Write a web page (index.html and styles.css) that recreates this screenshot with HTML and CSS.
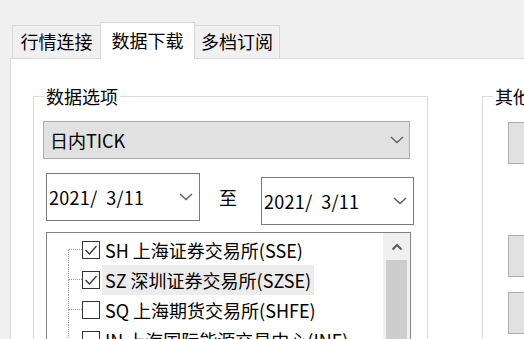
FILE: index.html
```html
<!DOCTYPE html>
<html lang="zh-CN">
<head>
<meta charset="utf-8">
<link rel="stylesheet" href="styles.css">
</head>
<body>
<div class="tabs">
  <div class="tab tab-1">行情连接</div>
  <div class="tab tab-2 active">数据下载</div>
  <div class="tab tab-3">多档订阅</div>
</div>
<div class="panel">
  <fieldset class="group group-data">
    <legend>数据选项</legend>
    <div class="combo">
      <span>日内TICK</span>
      <svg class="chev" width="14" height="8" viewBox="0 0 14 8"><path d="M1 1 L7 6.5 L13 1" fill="none" stroke="#606060" stroke-width="1.4"/></svg>
    </div>
    <div class="date-row">
      <div class="date date-1">
        <span class="date-text">2021/  3/11</span>
        <svg class="chev" width="14" height="8" viewBox="0 0 14 8"><path d="M1 1 L7 6.5 L13 1" fill="none" stroke="#606060" stroke-width="1.4"/></svg>
      </div>
      <div class="to">至</div>
      <div class="date date-2">
        <span class="date-text">2021/  3/11</span>
        <svg class="chev" width="14" height="8" viewBox="0 0 14 8"><path d="M1 1 L7 6.5 L13 1" fill="none" stroke="#606060" stroke-width="1.4"/></svg>
      </div>
    </div>
    <div class="treebox">
      <ul class="tree">
        <li class="row first">
          <span class="conn"><span class="conn-top"></span><span class="conn-bot"></span></span>
          <span class="cb"><svg width="18" height="18" viewBox="0 0 18 18"><path d="M3.5 9 L7.5 13 L14.5 5" fill="none" stroke="#333" stroke-width="1.3"/></svg></span>
          <span class="label">SH 上海证券交易所(SSE)</span>
        </li>
        <li class="row">
          <span class="conn"><span class="conn-top"></span><span class="conn-bot"></span></span>
          <span class="cb"><svg width="18" height="18" viewBox="0 0 18 18"><path d="M3.5 9 L7.5 13 L14.5 5" fill="none" stroke="#333" stroke-width="1.3"/></svg></span>
          <span class="label hl">SZ 深圳证券交易所(SZSE)</span>
        </li>
        <li class="row">
          <span class="conn"><span class="conn-top"></span><span class="conn-bot"></span></span>
          <span class="cb"></span>
          <span class="label">SQ 上海期货交易所(SHFE)</span>
        </li>
        <li class="row">
          <span class="conn"><span class="conn-top"></span><span class="conn-bot"></span></span>
          <span class="cb"></span>
          <span class="label">IN 上海国际能源交易中心(INE)</span>
        </li>
      </ul>
      <div class="scrollbar">
        <div class="sb-up"><svg width="12" height="8" viewBox="0 0 12 8"><path d="M1.5 6.5 L6 2 L10.5 6.5" fill="none" stroke="#606060" stroke-width="2.2"/></svg></div>
        <div class="sb-thumb"></div>
      </div>
    </div>
  </fieldset>
  <fieldset class="group group-other">
    <legend>其他</legend>
    <div class="btn btn-1"></div>
    <div class="btn btn-2"></div>
    <div class="btn btn-3"></div>
  </fieldset>
</div>
</body>
</html>
```

FILE: styles.css
```css
html, body {
  margin: 0;
  padding: 0;
  overflow: hidden;
}
body {
  width: 524px;
  height: 339px;
  background: #f0f0f0;
  font-family: "Noto Sans CJK SC", "Noto Sans", sans-serif;
  font-size: 18px;
  color: #000;
}
.tabs {
  display: flex;
  align-items: flex-end;
  padding-top: 22px;
  padding-left: 12px;
  height: 36px;
}
.tab {
  box-sizing: border-box;
  height: 33px;
  line-height: 31px;
  text-align: center;
  border: 1px solid #d9d9d9;
  border-bottom: none;
  background: #f0f0f0;
}
.tab-1 { width: 88px; border-right: none; }
.tab-2 { width: 95px; }
.tab-3 { width: 85px; border-left: none; }
.tab.active {
  height: 37px;
  line-height: 34px;
  background: #fff;
  margin-bottom: -1px;
  position: relative;
  z-index: 1;
}
.panel {
  display: flex;
  align-items: flex-start;
  margin-left: 10px;
  width: 514px;
  height: 281px;
  overflow: hidden;
  box-sizing: border-box;
  background: #fff;
  border-top: 1px solid #d9d9d9;
  border-left: 1px solid #d9d9d9;
  padding-left: 22px;
  padding-top: 25px;
}
.group {
  margin: 0;
  padding: 0;
  border: 1px solid #dcdcdc;
  min-width: 0;
  height: 400px;
  box-sizing: border-box;
}
.group legend {
  margin-left: 10px;
  padding: 0 2px;
  line-height: 24px;
  height: 24px;
  white-space: nowrap;
}
.group-data {
  width: 395px;
  flex: none;
}
.group-other {
  margin-left: 54px;
  width: 150px;
  flex: none;
}
.combo {
  box-sizing: border-box;
  margin-top: 13px;
  margin-left: 9px;
  width: 367px;
  height: 38px;
  background: #e1e1e1;
  border: 1px solid #adadad;
  display: flex;
  align-items: center;
  justify-content: space-between;
  padding-left: 6px;
  padding-right: 5px;
}
.combo span { line-height: 24px; }
.chev { display: block; }
.date-row {
  display: flex;
  align-items: flex-start;
  margin-top: 14px;
  margin-left: 12px;
}
.date {
  box-sizing: border-box;
  height: 48px;
  border: 1px solid #7a7a7a;
  background: #fff;
  display: flex;
  align-items: center;
  justify-content: space-between;
  padding-left: 2px;
  padding-right: 6px;
}
.date-1 { width: 154px; }
.date-2 { width: 153px; margin-top: 4px; }
.date-text { white-space: pre; line-height: 24px; letter-spacing: 0.3px; }
.to {
  width: 61px;
  box-sizing: border-box;
  padding-left: 19px;
  line-height: 48px;
}
.treebox {
  box-sizing: border-box;
  margin-top: 7px;
  margin-left: 12px;
  width: 365px;
  height: 140px;
  border: 1px solid #828282;
  display: flex;
}
.tree {
  list-style: none;
  margin: 0;
  padding: 2px 0 0 21px;
  flex: 1;
  min-width: 0;
  overflow: hidden;
}
.row {
  display: flex;
  align-items: center;
  height: 30px;
  white-space: nowrap;
}
.conn {
  display: flex;
  flex-direction: column;
  width: 14px;
  height: 30px;
  flex: none;
}
.conn-top {
  box-sizing: border-box;
  height: 15px;
  border-left: 1px dotted #a0a0a0;
  border-bottom: 1px dotted #a0a0a0;
}
.conn-bot {
  height: 15px;
  border-left: 1px dotted #a0a0a0;
}
.row.first .conn-top { border-left-color: transparent; }
.cb {
  box-sizing: border-box;
  width: 18px;
  height: 18px;
  border: 1px solid #333;
  flex: none;
  display: flex;
  align-items: center;
  justify-content: center;
}
.cb svg { display: block; margin: -1px; }
.label {
  margin-left: 2px;
  padding: 0 3px;
  height: 30px;
  line-height: 30px;
}
.label.hl { background: #ececec; }
.scrollbar {
  width: 27px;
  flex: none;
  background: #f0f0f0;
  display: flex;
  flex-direction: column;
  align-items: center;
}
.sb-up {
  height: 27px;
  display: flex;
  align-items: center;
  justify-content: center;
  width: 100%;
}
.sb-thumb {
  width: 21px;
  flex: 1;
  background: #cdcdcd;
}
.btn {
  box-sizing: border-box;
  margin-left: 25px;
  width: 110px;
  height: 42px;
  background: #e1e1e1;
  border: 1px solid #adadad;
}
.btn-1 { margin-top: 14px; }
.btn-2 { margin-top: 71px; }
.btn-3 { margin-top: 15px; }
```
